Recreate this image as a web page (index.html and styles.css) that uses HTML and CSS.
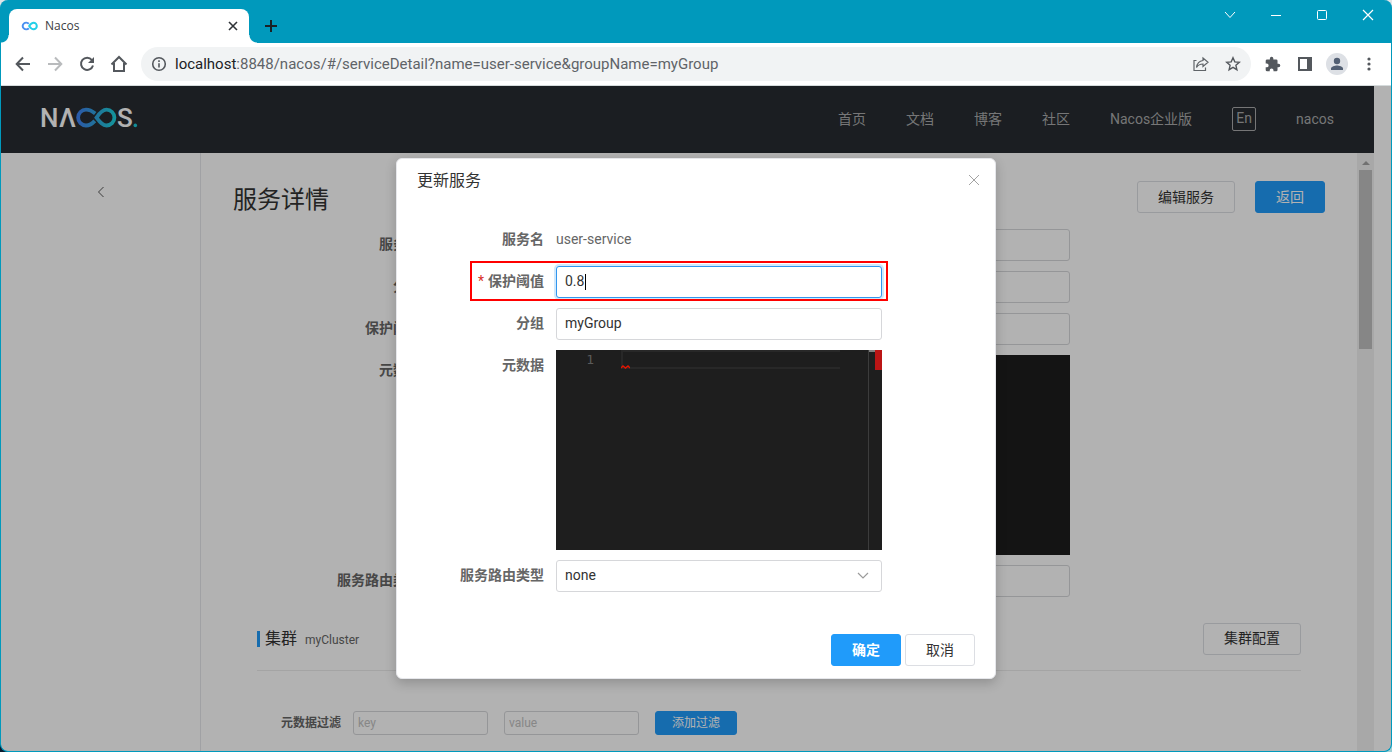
FILE: index.html
```html
<!DOCTYPE html>
<html lang="zh-CN">
<head>
<meta charset="utf-8">
<meta name="viewport" content="width=device-width, initial-scale=1">
<title>Nacos</title>
<link rel="stylesheet" href="styles.css">
</head>
<body>
<div class="window">
  <div class="tabstrip">
    <div class="tab">
      <svg class="favicon" width="17" height="10" viewBox="0 0 17 10" fill="none" stroke-width="2">
        <path d="M7.800 7.200A3.500 3.300 0 1 1 7.800 2.800" stroke="#4a90f0"/>
        <path d="M8.200 5C9.500 3 10.800 1.700 12.500 1.700a3.300 3.300 0 0 1 0 6.600C10.800 8.300 9.500 7 8.200 5Z" stroke="#24cfe8"/>
      </svg>
      <span class="tab-title">Nacos</span>
      <button class="plain tab-close" aria-label="关闭标签页"><svg width="10" height="10" viewBox="0 0 10 10" stroke="#303438" stroke-width="1.600"><path d="M1 1l8 8M9 1l-8 8"/></svg></button>
    </div>
    <button class="plain new-tab" aria-label="新标签页"><svg width="14" height="14" viewBox="0 0 14 14" stroke="#1b2226" stroke-width="2"><path d="M7 1v12M1 7h12"/></svg></button>
    <div class="win-controls">
      <button class="plain win-btn" aria-label="搜索标签页"><svg width="12" height="8" viewBox="0 0 12 8" fill="none" stroke="#fff"><path d="M1 1l5 5.500L11 1"/></svg></button>
      <button class="plain win-btn" aria-label="最小化"><svg width="12" height="12" viewBox="0 0 12 12" fill="none" stroke="#fff"><path d="M1 6.500h10"/></svg></button>
      <button class="plain win-btn" aria-label="最大化"><svg width="12" height="12" viewBox="0 0 12 12" fill="none" stroke="#fff"><rect x="1.500" y="1.500" width="9" height="9" rx="1"/></svg></button>
      <button class="plain win-btn" aria-label="关闭"><svg width="12" height="12" viewBox="0 0 12 12" fill="none" stroke="#fff" stroke-width="1.200"><path d="M1 1l10 10M11 1L1 11"/></svg></button>
    </div>
  </div>

  <div class="toolbar">
    <button class="plain tool" aria-label="后退"><svg width="16" height="16" viewBox="0 0 16 16" fill="none" stroke="#54585d" stroke-width="2"><path d="M15 8H2M8 1.500L1.700 8 8 14.500"/></svg></button>
    <button class="plain tool" aria-label="前进"><svg width="16" height="16" viewBox="0 0 16 16" fill="none" stroke="#b9bbbd" stroke-width="2"><path d="M1 8h13M8 1.500L14.300 8 8 14.500"/></svg></button>
    <button class="plain tool" aria-label="重新加载"><svg width="16" height="16" viewBox="0 0 16 16" fill="none" stroke="#54585d" stroke-width="2"><path d="M12.900 4A6.100 6.100 0 1 0 14 9.500"/><path d="M15 1v6H9z" fill="#54585d" stroke="none"/></svg></button>
    <button class="plain tool" aria-label="主页"><svg width="18" height="18" viewBox="0 0 18 18" fill="none" stroke="#54585d" stroke-width="2"><path d="M1.500 9.500L9 2l7.500 7.500M4 8v8h10V8"/></svg></button>
    <div class="omnibox">
      <svg width="16" height="16" viewBox="0 0 16 16" fill="none" stroke="#54585d" stroke-width="1.600"><circle cx="8" cy="8" r="6.300"/><path d="M8 7.200v4.200M8 4.300v1.700"/></svg>
      <div class="url"><span class="host">localhost</span>:8848/nacos/#/serviceDetail?name=user-service&amp;groupName=myGroup</div>
      <button class="plain omni-btn" aria-label="分享"><svg width="16" height="16" viewBox="0 0 16 16" fill="none" stroke="#606468" stroke-width="1.200"><path d="M3.500 4.500H1v10h11.500v-3"/><path d="M10 2l5 4.200-5 4.200V8C7 8 5 9 3.500 11.500 4 7.500 6 5 10 4.500z"/></svg></button>
      <button class="plain omni-btn" aria-label="收藏"><svg width="16" height="16" viewBox="0 0 16 16" fill="none" stroke="#54585d" stroke-width="1.400"><path d="M8 1.800l1.800 4.100 4.500.4-3.400 3 1 4.400L8 11.400l-3.900 2.300 1-4.400-3.400-3 4.500-.4z"/></svg></button>
    </div>
    <button class="plain tool" aria-label="扩展程序"><svg width="16" height="16" viewBox="1 0 23 23" fill="#54585d"><path d="M20.500 11H19V7a2 2 0 0 0-2-2h-4V3.500a2.500 2.500 0 0 0-5 0V5H4a2 2 0 0 0-2 2v3.800h1.500a2.700 2.700 0 0 1 0 5.400H2V20a2 2 0 0 0 2 2h3.800v-1.500a2.700 2.700 0 0 1 5.400 0V22H17a2 2 0 0 0 2-2v-4h1.500a2.500 2.500 0 0 0 0-5z"/></svg></button>
    <button class="plain tool" aria-label="侧边栏"><svg width="14" height="14" viewBox="0 0 14 14"><path fill="#54585d" fill-rule="evenodd" d="M0 0h14v14H0zM2 2v10h7V2z"/></svg></button>
    <button class="plain tool" aria-label="用户"><svg width="22" height="22" viewBox="0 0 22 22"><circle cx="11" cy="11" r="11" fill="#dde0e5"/><circle cx="11" cy="8" r="3.200" fill="#525f73"/><path fill="#525f73" d="M5 17v-1.500c0-2 4-3 6-3s6 1 6 3V17z"/></svg></button>
    <button class="plain tool" aria-label="菜单"><svg width="4" height="14" viewBox="0 0 4 14" fill="#54585d"><circle cx="2" cy="2" r="1.600"/><circle cx="2" cy="7" r="1.600"/><circle cx="2" cy="12" r="1.600"/></svg></button>
  </div>

  <div class="page">
    <div class="app">
      <header class="header">
        <a href="#" class="logo" aria-label="Nacos">
          <svg width="104" height="35" viewBox="-3 -6 104 35">
            <defs><linearGradient id="lg" gradientUnits="userSpaceOnUse" x1="37" y1="0" x2="76" y2="0"><stop offset="0" stop-color="#3f80f2"/><stop offset=".5" stop-color="#2fa6dd"/><stop offset="1" stop-color="#1cd6e0"/></linearGradient></defs>
            <g class="logo-text"><text x="0" y="20">N</text><text x="19" y="20">Λ</text><text x="77" y="20">S</text></g>
            <g fill="none" stroke="url(#lg)" stroke-width="3.800"><path d="M55.200 6.600C51.500 3.600 49 2.700 46 2.700a7.900 7.900 0 0 0 0 15.800c3 0 5.500-1 8.800-4.600"/><path d="M56.500 10.600C60 5.500 62.500 2.700 66.500 2.700a7.900 7.900 0 0 1 0 15.800c-4 0-6.500-3.400-10-7.900z"/></g>
            <circle cx="95.300" cy="18.400" r="1.800" fill="#1cc9d8"/>
          </svg>
        </a>
        <nav class="nav">
          <a href="#">首页</a><a href="#">文档</a><a href="#">博客</a><a href="#">社区</a><a href="#">Nacos企业版</a>
          <button class="lang">En</button>
          <a href="#">nacos</a>
        </nav>
      </header>
      <div class="body">
        <aside class="sidebar"><button class="plain" aria-label="返回上一页"><svg width="8" height="12" viewBox="0 0 8 12" fill="none" stroke="#555"><path d="M6.500 1L1.500 6l5 5"/></svg></button></aside>
        <main class="main">
          <div class="title-row">
            <h1>服务详情</h1>
            <button class="btn">编辑服务</button>
            <button class="btn primary">返回</button>
          </div>
          <form class="detail">
            <label for="d-name">服务名:</label><input id="d-name" class="field" readonly>
            <label for="d-group">分组:</label><input id="d-group" class="field" readonly>
            <label for="d-th">保护阈值:</label><input id="d-th" class="field" readonly>
            <label for="d-meta">元数据:</label><textarea id="d-meta" class="code" readonly></textarea>
            <label for="d-type">服务路由类型:</label><input id="d-type" class="field" readonly>
          </form>
          <section class="cluster">
            <div class="cluster-head">
              <h2>集群</h2><span class="cluster-name">myCluster</span>
              <button class="btn">集群配置</button>
            </div>
            <div class="filter">
              <label for="f-key">元数据过滤</label>
              <input id="f-key" class="field small" placeholder="key">
              <input class="field small" placeholder="value" aria-label="value">
              <button class="btn primary small">添加过滤</button>
            </div>
          </section>
        </main>
        <div class="scrollbar"><i class="arrow"></i><i class="thumb"></i></div>
      </div>
    </div>

    <div class="overlay">
      <div class="dialog" role="dialog" aria-labelledby="dlg-title">
        <div class="dialog-head">
          <h3 id="dlg-title">更新服务</h3>
          <button class="plain" aria-label="关闭对话框"><svg width="12" height="12" viewBox="0 0 12 12" stroke="#a3a3a3"><path d="M1 1l10 10M11 1L1 11"/></svg></button>
        </div>
        <form class="dialog-form">
          <div class="row"><span class="label">服务名</span><span class="value">user-service</span></div>
          <div class="row marked"><label class="label" for="th"><b class="req">*</b>保护阈值</label><div class="control"><input id="th" class="field focused" value="0.8"><i class="caret"></i></div></div>
          <div class="row"><label class="label" for="grp">分组</label><input id="grp" class="field" value="myGroup"></div>
          <div class="row"><span class="label">元数据</span>
            <div class="editor">
              <span class="line-no">1</span>
              <div class="line"><svg class="squiggle" width="9" height="4" viewBox="0 0 9 4" fill="none" stroke="#e51400" stroke-width="1.400"><path d="M0 3l2-2 2.500 2L7 1l2 2"/></svg></div>
              <div class="ruler"></div>
            </div>
          </div>
          <div class="row"><label class="label" for="type">服务路由类型</label>
            <div class="control"><select id="type" class="field"><option>none</option></select><svg class="chev" width="12" height="8" viewBox="0 0 12 8" fill="none" stroke="#9b9b9b" stroke-width="1.200"><path d="M1 1l5 5 5-5"/></svg></div>
          </div>
        </form>
        <div class="dialog-foot"><button class="btn primary strong">确定</button><button class="btn">取消</button></div>
      </div>
    </div>
  </div>
</div>
</body>
</html>
```
FILE: styles.css
```css
*, *::before, *::after { box-sizing: border-box; }
html, body { height: 100%; margin: 0; }
body {
  background: linear-gradient(#dfe5e8 50%, transparent 50%), linear-gradient(90deg, #0b1a2e 50%, #9fd0d6 50%);
  font-family: Roboto, "Noto Sans CJK SC", sans-serif;
  font-size: 14px;
  color: #333;
}
button, input, select, textarea { font: inherit; color: inherit; }
h1, h2, h3 { margin: 0; font-weight: 400; }
svg { display: block; }
.plain { border: 0; padding: 0; background: none; display: flex; align-items: center; justify-content: center; }

.window {
  height: 100vh;
  display: flex;
  flex-direction: column;
  background: #0099bc;
  border: 1px solid #0099bc;
  border-top: 0;
  border-radius: 8px;
  overflow: hidden;
}

.tabstrip { display: flex; height: 43px; flex: none; align-items: flex-end; }
.tab {
  position: relative;
  width: 240px;
  height: 34px;
  margin-left: 8px;
  padding: 0 11px 0 12px;
  display: flex;
  align-items: center;
  gap: 7px;
  background: #fff;
  border-radius: 8px 8px 0 0;
}
.tab::before, .tab::after {
  content: "";
  position: absolute;
  bottom: 0;
  width: 8px;
  height: 8px;
}
.tab::before { right: 100%; background: radial-gradient(circle at 0 0, transparent 7px, #fff 8px); }
.tab::after { left: 100%; background: radial-gradient(circle at 100% 0, transparent 7px, #fff 8px); }
.tab-title { flex: 1; font: 12px/16px "Open Sans", sans-serif; color: #3c4043; }
.new-tab { width: 28px; height: 34px; margin-left: 8px; }
.win-controls { display: flex; margin-left: auto; align-self: flex-start; }
.win-btn { width: 46px; height: 30px; }

.toolbar {
  flex: none;
  height: 43px;
  padding: 0 6px;
  display: flex;
  align-items: center;
  background: #fff;
  border-bottom: 1px solid #d5dbdc;
}
.tool { width: 32px; height: 34px; flex: none; }
.omnibox {
  flex: 1;
  min-width: 0;
  height: 34px;
  margin: 0 6px;
  padding: 0 2px 0 10px;
  display: flex;
  align-items: center;
  gap: 8px;
  border-radius: 17px;
  background: #f1f3f4;
}
.url { flex: 1; font: 15px/20px Roboto, sans-serif; color: #5f6368; white-space: nowrap; overflow: hidden; }
.host { color: #202124; }
.omni-btn { width: 32px; height: 32px; }
.omni-btn + .omni-btn { margin-left: -8px; }

.page { position: relative; flex: 1; min-height: 0; background: #fff; border-radius: 0 0 7px 7px; overflow: hidden; }
.app { height: 100%; margin-right: 17px; display: flex; flex-direction: column; }
.header {
  flex: none;
  height: 67px;
  padding: 0 40px 2px 36px;
  display: flex;
  align-items: center;
  justify-content: space-between;
  background: #272c31;
}
.logo-text { fill: #fff; font: 500 26px Roboto, sans-serif; }
.nav { display: flex; align-items: center; gap: 40px; color: #a9aaab; }
.nav a { color: inherit; text-decoration: none; line-height: 20px; }
.lang { width: 24px; height: 24px; padding: 0 0 2px; border: 1px solid #a9aaab; border-radius: 2px; background: none; line-height: 20px; }

.body { flex: 1; min-height: 0; display: flex; }
.sidebar { width: 200px; flex: none; display: flex; justify-content: center; align-items: flex-start; padding-top: 33px; border-right: 1px solid #e6e7eb; }
.main { flex: 1; min-width: 0; padding: 28px 32px; overflow: hidden; }
.scrollbar { width: 17px; flex: none; background: #f1f1f1; display: flex; flex-direction: column; align-items: center; }
.arrow { width: 0; height: 5px; margin: 7px 0 5px; border: 4px solid transparent; border-top: 0; border-bottom: 4px solid #a3a3a3; }
.thumb { width: 13px; height: 179px; background: #c1c1c1; }

.title-row { display: flex; align-items: center; gap: 20px; height: 32px; margin-bottom: 16px; }
.title-row h1 { flex: 1; font-size: 24px; line-height: 32px; padding-top: 6px; }

.btn {
  height: 32px;
  padding: 0 20px 1px;
  border: 1px solid #dcdee3;
  border-radius: 3px;
  background: #fff;
  line-height: 20px;
}
.btn.primary { border-color: #209bfa; background: #209bfa; color: #fff; }
.btn.strong { font-weight: 700; }
.btn.small { height: 24px; padding: 0 16px; font-size: 12px; }

.field {
  width: 100%;
  height: 32px;
  padding: 0 8px 2px;
  border: 1px solid #d6d7da;
  border-radius: 3px;
  background: #fff;
  outline: 0;
}
.field.small { width: 135px; height: 24px; padding: 0 4px; font-size: 12px; }
.field::placeholder { color: #c2c2c2; opacity: 1; }

.detail {
  display: grid;
  grid-template-columns: 192px minmax(0, 1fr);
  column-gap: 8px;
  row-gap: 10px;
  padding-right: 255px;
}
.detail label { font-weight: 700; line-height: 30px; text-align: right; color: #666; }
.code { height: 200px; border: 0; background: #1e1e1e; resize: none; }

.cluster { margin: 26px 24px 0; }
.cluster-head { display: flex; align-items: center; height: 48px; padding-bottom: 16px; border-bottom: 1px solid #ebebeb; }
.cluster-head h2 { padding-left: 5px; border-left: 3px solid #209bfa; font-size: 16px; line-height: 16px; }
.cluster-name { flex: 1; margin-left: 8px; font-size: 12px; color: #666; padding-top: 2px; }
.filter { display: flex; align-items: center; gap: 16px; padding: 40px 24px 0; }
.filter label { font-size: 12px; line-height: 16px; font-weight: 700; color: #666; margin-right: -4px; }

.overlay {
  position: absolute;
  inset: 0;
  display: flex;
  align-items: center;
  justify-content: center;
  background: rgba(0, 0, 0, .3);
}
.dialog {
  width: 600px;
  padding: 0 20px 12px;
  border: 1px solid #e6e7eb;
  border-radius: 6px;
  background: #fff;
  box-shadow: 0 4px 12px rgba(0, 0, 0, .2);
}
.dialog-head { display: flex; align-items: center; justify-content: space-between; height: 43px; margin-right: -10px; }
.dialog-head h3 { font-size: 16px; line-height: 20px; }
.dialog-head .plain { width: 22px; height: 24px; padding-bottom: 2px; }
.dialog-form { display: grid; gap: 10px; padding-top: 22px; }
.row { position: relative; display: grid; grid-template-columns: 127px minmax(0, 326px); column-gap: 12px; min-height: 32px; }
.label { font-weight: 700; line-height: 30px; text-align: right; color: #666; white-space: nowrap; }
.value { line-height: 30px; color: #666; }
.req { margin-right: 4px; color: #d93026; font-weight: 400; }
.marked::after {
  content: "";
  position: absolute;
  left: 53px;
  top: -5px;
  width: 418px;
  height: 40px;
  border: 2px solid #f00;
  pointer-events: none;
}
.control { position: relative; }
.focused { border-color: #3296ee; box-shadow: 0 0 0 2px #d0e8fc; }
.caret { position: absolute; left: 29px; top: 8px; width: 1px; height: 16px; background: #000; }
select.field { appearance: none; }
.chev { position: absolute; right: 13px; top: 12px; }

.editor { display: grid; grid-template-columns: 65px minmax(0, 1fr) 14px; height: 200px; background: #1e1e1e; }
.line-no { padding-right: 27px; text-align: right; font: 13px/20px "DejaVu Sans Mono", monospace; color: #5a5a5a; }
.line { position: relative; height: 19px; margin-right: 28px; border: 2px solid #282828; border-right: 0; }
.squiggle { position: absolute; left: -2px; bottom: -2px; }
.ruler { border-left: 1px solid #3c3c3c; background: linear-gradient(#bb1515, #bb1515) right top / 7px 20px no-repeat, linear-gradient(#808080, #808080) left top / 6px 2px no-repeat; }
.dialog-foot { display: flex; justify-content: flex-end; gap: 4px; padding-top: 42px; }
```
